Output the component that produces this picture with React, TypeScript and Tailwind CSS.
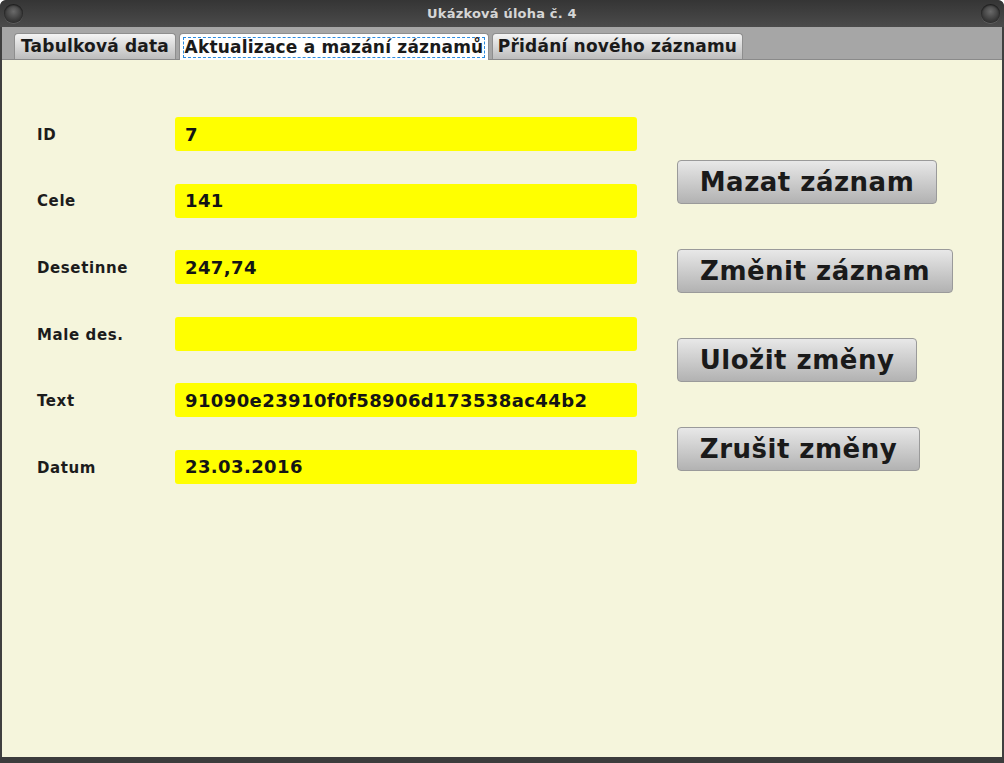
import React from 'react'

const fields = [
  { label: 'ID', value: '7' },
  { label: 'Cele', value: '141' },
  { label: 'Desetinne', value: '247,74' },
  { label: 'Male des.', value: '' },
  { label: 'Text', value: '91090e23910f0f58906d173538ac44b2' },
  { label: 'Datum', value: '23.03.2016' },
]

const buttons = [
  { text: 'Mazat záznam', w: 'w-[260px]' },
  { text: 'Změnit záznam', w: 'w-[276px]' },
  { text: 'Uložit změny', w: 'w-[240px]' },
  { text: 'Zrušit změny', w: 'w-[243px]' },
]

function WinDot() {
  return (
    <span className="w-[19px] h-[19px] rounded-full bg-[radial-gradient(circle_at_50%_40%,#6a6a6a,#3a3a3a_60%,#2a2a2a)] shadow-[inset_0_1px_2px_rgba(0,0,0,0.7),0_1px_0_rgba(255,255,255,0.12)]" />
  )
}

export default function App() {
  return (
    <div className="w-[1004px] h-[763px] overflow-hidden font-['DejaVu_Sans',sans-serif] bg-[#3c3c3c] rounded-t-[6px] flex flex-col">
      {/* titulek okna */}
      <div className="h-[27px] flex items-center justify-between px-[4px] bg-gradient-to-b from-[#353535] to-[#4b4b4b] rounded-t-[6px]">
        <WinDot />
        <span className="text-[13px] font-bold text-[#d6d6d6] tracking-[0.2px]">
          Ukázková úloha č. 4
        </span>
        <WinDot />
      </div>

      {/* tělo okna */}
      <div className="flex-1 flex flex-col border-x-[2px] border-[#3f3f3f] mb-[6px]">
        {/* záložky */}
        <div className="h-[33px] bg-[#a6a6a6] border-b border-[#8a8a8a] flex items-end gap-[3px] pl-[12px]">
          <div className="w-[162px] h-[26px] flex items-center justify-center rounded-t-[4px] border border-b-0 border-[#8e8e8e] bg-gradient-to-b from-[#f4f4f4] to-[#bdbdbd] text-[17px] tracking-[0.2px] font-bold text-[#1a1a1a]">
            Tabulková data
          </div>
          <div className="w-[310px] h-[27px] flex items-center justify-center rounded-t-[4px] border border-b-0 border-[#8e8e8e] bg-white mb-[-1px] text-[17px] tracking-[0.2px] font-bold text-[#1a1a1a]">
            <span className="px-[1px] leading-[19px] border border-dashed border-[#2a8be0]">
              Aktualizace a mazání záznamů
            </span>
          </div>
          <div className="w-[251px] h-[26px] flex items-center justify-center rounded-t-[4px] border border-b-0 border-[#8e8e8e] bg-gradient-to-b from-[#f4f4f4] to-[#bdbdbd] text-[17px] tracking-[0.2px] font-bold text-[#1a1a1a]">
            Přidání nového záznamu
          </div>
        </div>

        {/* obsah */}
        <div className="flex-1 bg-[#f5f5dc] flex pt-[57px] pl-[35px]">
          <div className="flex flex-col gap-[32.6px]">
            {fields.map(f => (
              <div key={f.label} className="flex items-center h-[34px]">
                <span className="w-[138px] text-[15px] tracking-[0.6px] font-bold text-[#1c1c1c] pt-[2px]">
                  {f.label}
                </span>
                <div className="w-[462px] h-[34px] rounded-[3px] bg-[#ffff00] flex items-center px-[10px] text-[18px] tracking-[0.4px] font-bold text-[#141414]">
                  {f.value}
                </div>
              </div>
            ))}
          </div>

          <div className="flex flex-col gap-[45px] ml-[40px] mt-[43px]">
            {buttons.map(b => (
              <button
                key={b.text}
                className={`${b.w} h-[44px] rounded-[4px] border border-[#9a9a9a] bg-gradient-to-b from-[#e8e8e8] to-[#b2b2b2] text-[26px] tracking-[0.5px] font-bold text-[#1a1a1a] flex items-center justify-center`}
              >
                {b.text}
              </button>
            ))}
          </div>
        </div>
      </div>
    </div>
  )
}
